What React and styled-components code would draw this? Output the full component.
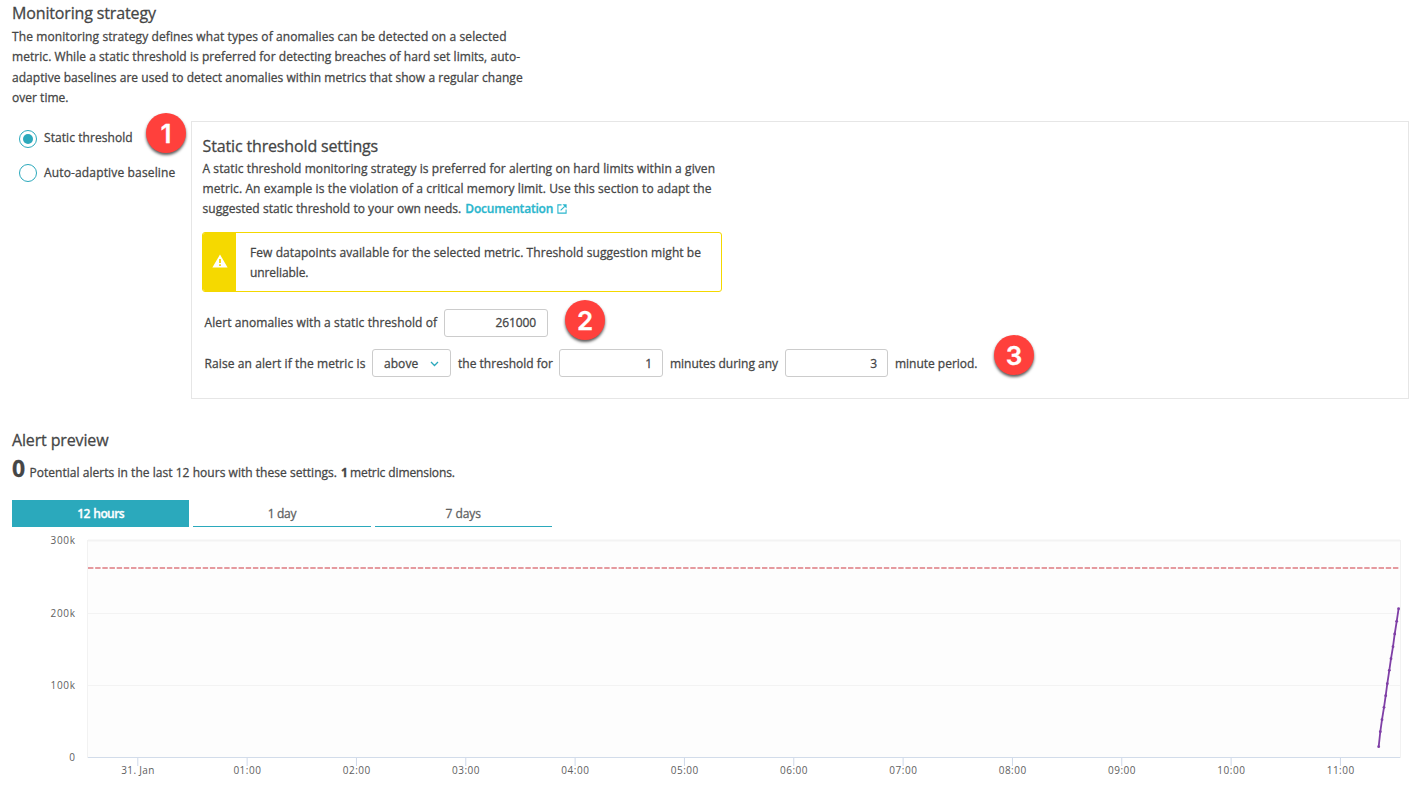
import React from 'react';
import styled, { createGlobalStyle } from 'styled-components';

const GlobalStyle = createGlobalStyle`
  * { box-sizing: border-box; }
  body {
    margin: 0;
    background: #fff;
    color: #454646;
    font: 500 12px/20.3px "Open Sans", "Noto Sans", sans-serif;
    -webkit-text-stroke: 0.28px currentColor;
    overflow: hidden;
  }
`;

const Page = styled.main`
  width: 1412px;
  height: 802px;
  padding: 1px 3px 0 12px;
  display: flex;
  flex-direction: column;
  overflow: hidden;
`;

const Heading = styled.h2`
  margin: 0;
  font-size: 16px;
  font-weight: 500;
  line-height: 24px;
  height: ${(p) => p.$h || 24}px;
  letter-spacing: -0.145px;
  white-space: nowrap;
`;

const Paragraph = styled.p`
  margin: 0;
`;

const Line = styled.span`
  display: block;
  white-space: nowrap;
  letter-spacing: ${(p) => p.$track}px;
`;

const Link = styled.a`
  color: #2ab6cd;
  font-weight: 600;
  letter-spacing: -0.2px;
  margin-left: 4px;
  svg { margin-left: 4px; vertical-align: -1px; }
`;

const Strategy = styled.section`
  display: flex;
  margin-top: 12.3px;
  height: 279px;
`;

const RadioGroup = styled.div`
  position: relative;
  flex: 0 0 179px;
  padding: 9px 0 0 7px;
  display: flex;
  flex-direction: column;
  gap: 16px;
`;

const RadioOption = styled.label`
  display: flex;
  align-items: center;
  gap: 7px;
  height: 18px;
  white-space: nowrap;
  letter-spacing: ${(p) => p.$track}px;
`;

const RadioText = styled.span`
  padding-top: ${(p) => p.$drop || 0}px;
`;

const RadioDot = styled.span`
  width: 18px;
  height: 18px;
  border: 1px solid #2ba9bc;
  border-radius: 50%;
  display: grid;
  place-items: center;
  &::after {
    content: '';
    width: 10px;
    height: 10px;
    border-radius: 50%;
    background: ${(p) => (p.$checked ? '#2ba9bc' : 'transparent')};
  }
`;

const Badge = styled.span`
  position: absolute;
  left: ${(p) => p.$x}px;
  top: ${(p) => p.$y}px;
  width: 40px;
  height: 40px;
  border-radius: 50%;
  background: #ff403c;
  box-shadow: 0 2px 3px rgba(0, 0, 0, 0.65);
  color: #fff;
  font: 600 26px/42px Inter, "Liberation Sans", sans-serif;
  text-align: center;
`;

const Panel = styled.div`
  position: relative;
  flex: 1;
  border: 1px solid #e6e6e6;
  padding: 12px 10px 0 10.5px;
  line-height: 20px;
`;

const Warning = styled.div`
  display: flex;
  width: 520px;
  height: 60px;
  margin: 13px 0 0 -0.5px;
  border: 1px solid #f4d800;
  border-radius: 3px;
  overflow: hidden;
`;

const WarningIcon = styled.div`
  width: 33px;
  background: #f5d900;
  display: grid;
  place-items: center;
  padding-bottom: 1px;
`;

const WarningText = styled.div`
  padding: 10px 0 0 14px;
`;

const FormRow = styled.div`
  display: flex;
  align-items: center;
  height: 28px;
  margin-top: ${(p) => p.$gap}px;
  padding-left: 2px;
`;

const FormText = styled.span`
  flex: none;
  width: ${(p) => p.$w}px;
  padding-top: ${(p) => p.$drop || 0}px;
  letter-spacing: ${(p) => p.$track}px;
  white-space: nowrap;
`;

const Field = styled.div`
  flex: none;
  width: ${(p) => p.$w || 104}px;
  height: 28px;
  border: 1px solid #ccc;
  border-radius: 3px;
  line-height: 26px;
  padding-top: ${(p) => p.$drop || 0}px;
  padding-right: ${(p) => (p.$drop ? 10 : 11)}px;
  text-align: right;
  letter-spacing: -0.13px;
  margin-right: 7px;
`;

const Select = styled.div`
  flex: none;
  display: flex;
  align-items: center;
  justify-content: space-between;
  width: 79px;
  height: 28px;
  border: 1px solid #ccc;
  border-radius: 3px;
  padding: 2px 11px 0 11px;
  margin-right: 7px;
  letter-spacing: 0.05px;
`;

const Preview = styled.section`
  margin-top: 29px;
`;

const Summary = styled.p`
  margin: 2px 0 0;
  height: 28px;
  line-height: 28px;
  display: flex;
  align-items: baseline;
  white-space: nowrap;
`;

const Count = styled.span`
  font-size: 23px;
  font-weight: 700;
  width: 17.5px;
`;

const Dimension = styled.b`
  font-weight: 700;
  width: 9px;
  margin-left: 4px;
`;

const Tabs = styled.nav`
  display: flex;
  gap: 4px;
  margin-top: 18px;
`;

const Tab = styled.button`
  width: 177.3px;
  height: 27px;
  padding: 1px 0 0;
  border: 0;
  border-bottom: 1px solid #2ba9bc;
  background: ${(p) => (p.$active ? '#2ba9bc' : '#fff')};
  color: ${(p) => (p.$active ? '#fff' : '#606161')};
  font: inherit;
  font-weight: ${(p) => (p.$active ? 600 : 500)};
  line-height: 25px;
  letter-spacing: ${(p) => p.$track}px;
  word-spacing: ${(p) => (p.$active ? 1 : 0)}px;
`;

const ChartSvg = styled.svg`
  display: block;
  margin-left: -12px;
  text { font: 500 10px "Open Sans", sans-serif; fill: #606060; -webkit-text-stroke: 0.25px #606060; }
`;

const hours = ['31. Jan', '01:00', '02:00', '03:00', '04:00', '05:00', '06:00', '07:00', '08:00', '09:00', '10:00', '11:00'];
const levels = [['300k', 13.5], ['200k', 86.5], ['100k', 158.5], ['0', 230.5]];
const samples = [
  [1378.7, 219.7], [1380.3, 204.7], [1382, 192.7], [1384, 180.3], [1385.7, 168.7], [1387.3, 156.7],
  [1389.3, 143.3], [1391, 131.7], [1393, 119.7], [1394.7, 107], [1396.7, 94.3], [1398.6, 81.7],
];

function Chart() {
  return (
    <ChartSvg width="1412" height="275" viewBox="0 0 1412 275">
      <rect x="87.5" y="13.5" width="1313" height="217" fill="#fdfdfd" stroke="#f2f2f2" />
      {levels.map(([label, y], i) => (
        <g key={label}>
          <line x1="88" x2="1400" y1={y} y2={y} stroke={i === 3 ? '#d2dcea' : '#f3f3f3'} strokeWidth={i === 0 ? 2 : 1} />
          <text x="75" y={Math.floor(y) + 4} textAnchor="end" textLength={i === 3 ? 6 : 24.5}>{label}</text>
        </g>
      ))}
      {hours.map((h, i) => {
        const x = 137.8 + i * 109.33;
        return (
          <g key={h}>
            <line x1={x} x2={x} y1="231" y2="239" stroke="#cfd9ea" />
            <text x={x} y="247" textAnchor="middle" textLength={i ? 27.5 : 33}>{h}</text>
          </g>
        );
      })}
      <line x1="88" x2="1400" y1="41" y2="41" stroke="#e59a9f" strokeWidth="1.9" strokeDasharray="5.4 1.77" />
      <polyline points={samples.map((p) => p.join(',')).join(' ')} fill="none" stroke="#7f3fa6" strokeWidth="1.8" />
      {samples.map(([x, y]) => <circle key={x} cx={x} cy={y} r="1.4" fill="#7f3fa6" />)}
    </ChartSvg>
  );
}

function ExternalIcon() {
  return (
    <svg width="10" height="10" viewBox="0 0 11 11" fill="none" stroke="currentColor" strokeWidth="1.2">
      <path d="M5 1H1v9h9V6" />
      <path d="M4 7l4.5-4.5" />
      <path d="M6 .4h4.6V5z" fill="currentColor" stroke="none" />
    </svg>
  );
}

export default function App() {
  return (
    <>
      <GlobalStyle />
      <Page>
        <Heading $h={26.2}>Monitoring strategy</Heading>
        <Paragraph>
          <Line $track={0.096}>The monitoring strategy defines what types of anomalies can be detected on a selected</Line>
          <Line $track={0.055}>metric. While a static threshold is preferred for detecting breaches of hard set limits, auto-</Line>
          <Line $track={0.055}>adaptive baselines are used to detect anomalies within metrics that show a regular change</Line>
          <Line $track={0.025}>over time.</Line>
        </Paragraph>

        <Strategy>
          <RadioGroup>
            <RadioOption $track={0.07}><RadioDot $checked /><RadioText>Static threshold</RadioText></RadioOption>
            <RadioOption $track={0.15}><RadioDot /><RadioText $drop={2}>Auto-adaptive baseline</RadioText></RadioOption>
            <Badge $x={134} $y={-8}>1</Badge>
          </RadioGroup>
          <Panel>
            <Heading $h={25}>Static threshold settings</Heading>
            <Paragraph>
              <Line $track={0.083}>A static threshold monitoring strategy is preferred for alerting on hard limits within a given</Line>
              <Line $track={0.103}>metric. An example is the violation of a critical memory limit. Use this section to adapt the</Line>
              <Line $track={0.035}>
                suggested static threshold to your own needs.
                <Link>Documentation<ExternalIcon /></Link>
              </Line>
            </Paragraph>
            <Warning>
              <WarningIcon>
                <svg width="16" height="14" viewBox="0 0 16 14">
                  <path d="M8 .5L15.6 13.5H.4z" fill="#fff" />
                  <path d="M7.1 5h1.8v4H7.1zM7.1 10.2h1.8V12H7.1z" fill="#f5d900" />
                </svg>
              </WarningIcon>
              <WarningText>
                <Line $track={0.072}>Few datapoints available for the selected metric. Threshold suggestion might be</Line>
                <Line $track={-0.085}>unreliable.</Line>
              </WarningText>
            </Warning>
            <FormRow $gap={17}>
              <FormText $w={239.5} $track={0.105}>Alert anomalies with a static threshold of</FormText>
              <Field>261000</Field>
            </FormRow>
            <FormRow $gap={12}>
              <FormText $w={167.5} $track={0.1} $drop={2}>Raise an alert if the metric is</FormText>
              <Select>
                above
                <svg width="9" height="6" viewBox="0 0 9 6" fill="none" stroke="#2ba9bc" strokeWidth="1.3">
                  <path d="M1 1l3.5 3.5L8 1" />
                </svg>
              </Select>
              <FormText $w={101} $track={0.018} $drop={2}>the threshold for</FormText>
              <Field $drop={1}>1</Field>
              <FormText $w={115} $track={-0.02} $drop={2}>minutes during any</FormText>
              <Field $w={103} $drop={1}>3</Field>
              <FormText $w={84} $track={-0.017} $drop={2}>minute period.</FormText>
            </FormRow>
            <Badge $x={373} $y={178}>2</Badge>
            <Badge $x={802} $y={213}>3</Badge>
          </Panel>
        </Strategy>

        <Preview>
          <Heading>Alert preview</Heading>
          <Summary>
            <Count>0</Count>
            <FormText $w={307.5} $track={0.035}>Potential alerts in the last 12 hours with these settings.</FormText>
            <Dimension>1</Dimension>
            <FormText $w={106} $track={-0.1}>metric dimensions.</FormText>
          </Summary>
          <Tabs>
            <Tab $active $track={-0.6}>12 hours</Tab>
            <Tab $track={-0.35}>1 day</Tab>
            <Tab $track={-0.04}>7 days</Tab>
          </Tabs>
          <Chart />
        </Preview>
      </Page>
    </>
  );
}
